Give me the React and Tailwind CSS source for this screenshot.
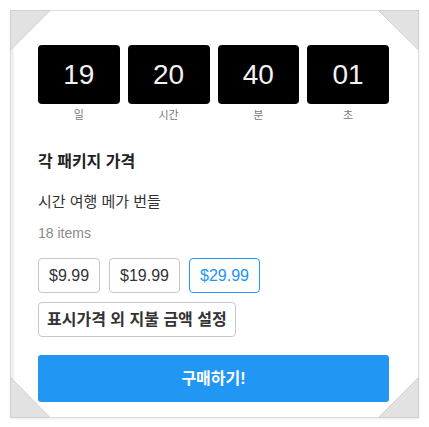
const TIMER = [
  { value: '19', label: '일' },
  { value: '20', label: '시간' },
  { value: '40', label: '분' },
  { value: '01', label: '초' },
];

const PRICES = ['$9.99', '$19.99', '$29.99'];

function Corner({ className, points }) {
  return (
    <svg className={`absolute h-[41px] w-[41px] ${className}`} viewBox="0 0 41 41">
      <polygon points={points} fill="#e2e2e2" stroke="#d0d0d0" strokeWidth="1" />
    </svg>
  );
}

export default function App() {
  const selected = 2;

  return (
    <div
      className="h-[427px] w-[429px] bg-white pl-[10px] pt-[10px]"
      style={{ fontFamily: '"Liberation Sans", "Noto Sans CJK KR", sans-serif' }}
    >
      <div className="relative flex h-[408px] w-[409px] flex-col border border-[#dcdcdc] bg-white pl-[27px] pr-[29px] pt-[34px] shadow-[inset_3px_0_0_#f0f0f0,0_1px_2px_rgba(0,0,0,0.08)]">
        <div className="grid grid-cols-4 gap-2">
          {TIMER.map((t) => (
            <div key={t.label} className="flex flex-col items-center">
              <div className="flex h-[59px] w-full items-center justify-center rounded bg-black text-[28px] text-[#f2f2f2]">
                {t.value}
              </div>
              <span className="mt-[4px] text-[11px] leading-[14px] text-[#777]">{t.label}</span>
            </div>
          ))}
        </div>

        <h2 className="mt-[30px] text-[16px] font-bold leading-[20px] text-[#222]">각 패키지 가격</h2>
        <p className="mt-[20px] text-[15px] leading-[20px] text-[#333]">시간 여행 메가 번들</p>
        <p className="mt-[13px] text-[14px] leading-[16px] text-[#8a8a8a]">18 items</p>

        <div className="mt-[17px] flex gap-[9px]">
          {PRICES.map((p, i) => (
            <button
              key={p}
              className={`h-[35px] rounded border px-[10px] text-[16px] ${
                i === selected ? 'border-[#2196f3] text-[#2196f3]' : 'border-[#c8c8c8] text-[#333]'
              }`}
            >
              {p}
            </button>
          ))}
        </div>
        <div className="mt-[9px] flex">
          <button className="h-[35px] rounded border border-[#c8c8c8] px-[8px] text-[16px] font-bold text-[#333]">
            표시가격 외 지불 금액 설정
          </button>
        </div>

        <button className="mt-[18px] h-[47px] w-full rounded-[3px] bg-[#2196f3] text-[16px] font-bold text-white">
          구매하기!
        </button>

        <Corner className="-left-px -top-px" points="0.5,0.5 40,0.5 0.5,40" />
        <Corner className="-right-px -top-px" points="0.5,0.5 40.5,0.5 40.5,40" />
        <Corner className="-bottom-px -left-px" points="0.5,0.5 0.5,40.5 40,40.5" />
        <Corner className="-bottom-px -right-px" points="40.5,0.5 40.5,40.5 0.5,40.5" />
      </div>
    </div>
  );
}
